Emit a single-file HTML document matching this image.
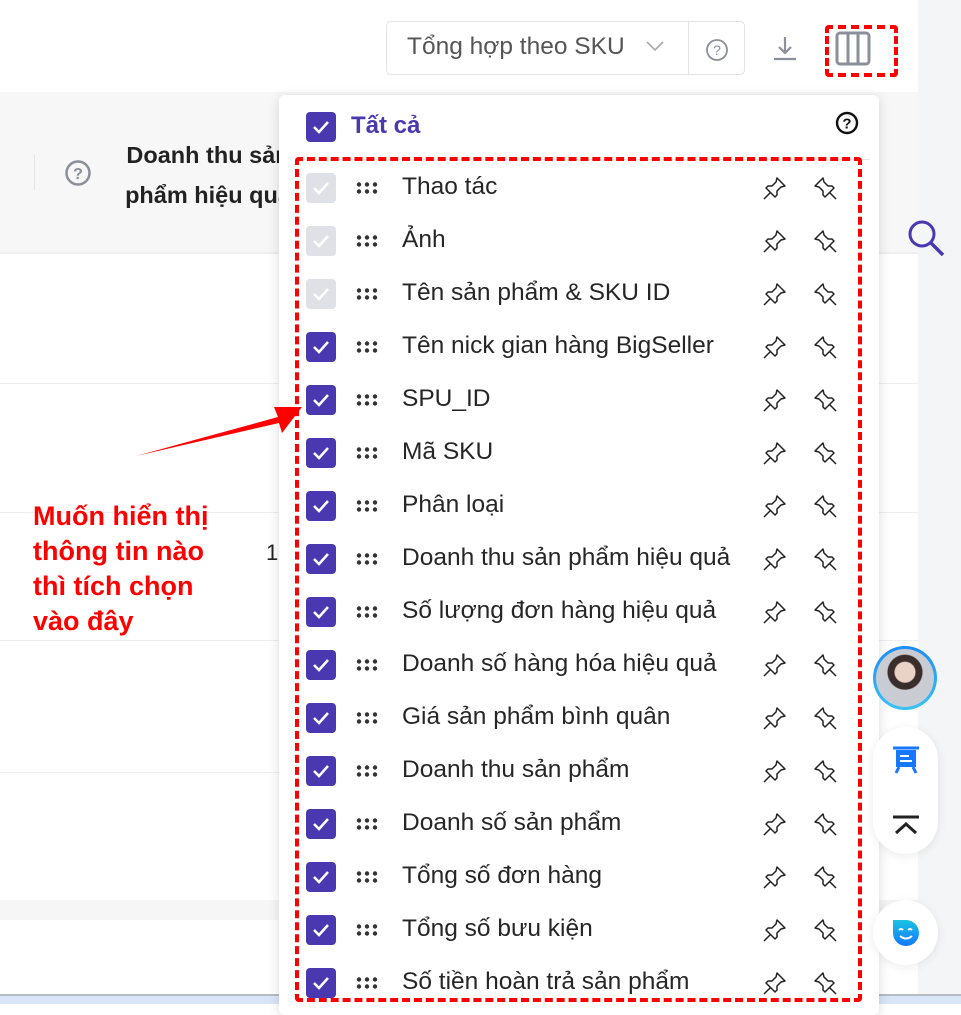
<!DOCTYPE html>
<html><head><meta charset="utf-8"><style>
*{margin:0;padding:0;box-sizing:border-box}
body{width:961px;height:1004px;overflow:hidden;background:#fff;font-family:"Liberation Sans","Noto Sans CJK SC",sans-serif;position:relative;color:#222}
.abs{position:absolute}
.row{position:absolute;left:306px;height:30px;width:540px}
.cb{position:absolute;left:0;top:0;width:30px;height:30px;border-radius:4px;background:#4a38b0}
.cb.dis{background:#dfe1e7}
.cb svg{position:absolute;left:6px;top:7px}
.dots{position:absolute;left:50px;top:9px}
.lbl{position:absolute;left:96px;top:0px;font-size:24.5px;color:#262626;white-space:nowrap}
.pin{position:absolute;top:2px}
</style></head><body>
<div class="abs" style="left:918px;top:0;width:43px;height:1004px;background:#f4f5f7"></div>
<div class="abs" style="left:0;top:92px;width:918px;height:162px;background:#f7f7f8;border-bottom:2px solid #eee"></div>
<div class="abs" style="left:34px;top:155px;width:1px;height:35px;background:#e5e5e5"></div>
<svg class="abs" style="left:64px;top:159px" width="28" height="28" viewBox="0 0 28 28"><circle cx="14" cy="14" r="11.5" fill="none" stroke="#8a8f99" stroke-width="2.5"/><text x="14" y="20" font-size="16" font-weight="bold" text-anchor="middle" fill="#8a8f99" font-family="Liberation Sans">?</text></svg>
<div class="abs" style="left:108px;top:135px;font-size:23.5px;font-weight:bold;line-height:40px;color:#222;text-align:center;width:200px">Doanh thu sản<br>phẩm hiệu quả</div>
<div class="abs" style="left:0;top:383px;width:918px;height:1px;background:#eee"></div>
<div class="abs" style="left:0;top:512px;width:918px;height:1px;background:#eee"></div>
<div class="abs" style="left:0;top:640px;width:918px;height:1px;background:#eee"></div>
<div class="abs" style="left:0;top:772px;width:918px;height:1px;background:#eee"></div>
<div class="abs" style="left:0;top:900px;width:918px;height:20px;background:#f6f6f7"></div>
<div class="abs" style="left:266px;top:540px;font-size:22px">1</div>
<div class="abs" style="left:0;top:994px;width:961px;height:10px;background:#d8e6f7;border-top:2px solid #b7bcc4"></div>
<div class="abs" style="left:386px;top:21px;width:359px;height:54px;border:1px solid #e3e3e6;border-radius:5px"></div>
<div class="abs" style="left:688px;top:22px;width:1px;height:52px;background:#e3e3e6"></div>
<div class="abs" style="left:407px;top:33px;font-size:24.5px;color:#555">Tổng hợp theo SKU</div>
<svg class="abs" style="left:645px;top:40px" width="20" height="12"><path d="M2 2l8 8 8-8" fill="none" stroke="#aaa" stroke-width="1.6"/></svg>
<svg class="abs" style="left:705px;top:38px" width="24" height="24" viewBox="0 0 24 24"><circle cx="12" cy="12" r="10" fill="none" stroke="#8a8f99" stroke-width="1.8"/><text x="12" y="17" font-size="14" text-anchor="middle" fill="#8a8f99" font-family="Liberation Sans">?</text></svg>
<svg class="abs" style="left:771px;top:34px" width="28" height="28" viewBox="0 0 28 28"><path d="M14 3v16M8 13l6 6 6-6M3 25h22" fill="none" stroke="#8a8f99" stroke-width="2.2"/></svg>
<svg class="abs" style="left:835px;top:31px" width="36" height="35" viewBox="0 0 36 35"><rect x="2" y="2" width="32" height="31" rx="3" fill="none" stroke="#8a8f99" stroke-width="3"/><path d="M13 2v31M23 2v31" stroke="#8a8f99" stroke-width="3"/></svg>
<div class="abs" style="left:825px;top:25px;width:73px;height:52px;border:4px dashed #f00;border-radius:4px"></div>
<svg class="abs" style="left:906px;top:218px" width="40" height="40" viewBox="0 0 40 40"><circle cx="16" cy="16" r="12" fill="none" stroke="#4a38b0" stroke-width="3"/><path d="M25 25l12 12" stroke="#4a38b0" stroke-width="3.5"/></svg>
<div class="abs" style="left:33px;top:499px;font-size:27px;font-weight:bold;color:#f00;line-height:35px">Muốn hiển thị<br>thông tin nào<br>thì tích chọn<br>vào đây</div>
<div class="abs" style="left:279px;top:95px;width:600px;height:920px;background:#fff;border-radius:6px;box-shadow:0 2px 12px rgba(0,0,0,.14)"></div>
<div class="abs" style="left:296px;top:159px;width:574px;height:1px;background:#e6e6e6"></div>
<div class="row" style="top:112px"><div class="cb"><svg width="18" height="16"><path d="M2 8l5 5 9-10" fill="none" stroke="#fff" stroke-width="2.5"/></svg></div><div class="lbl" style="left:45px;top:0;font-weight:bold;color:#4a38b0;font-size:24px">Tất cả</div></div>
<svg class="abs" style="left:835px;top:111px" width="24" height="24" viewBox="0 0 24 24"><circle cx="12" cy="12" r="10" fill="none" stroke="#111" stroke-width="2.4"/><text x="12" y="17.5" font-size="15" font-weight="bold" text-anchor="middle" fill="#111" font-family="Liberation Sans">?</text></svg>
<div id="rows"></div>
<div class="abs" style="left:295px;top:157px;width:567px;height:845px;border:4px dashed #f00;border-radius:4px"></div>
<svg class="abs" style="left:130px;top:395px" width="175" height="70"><path d="M6 61 L148 22 L144 12 L172 12 L152 38 L149 28 Z" fill="#f00"/></svg>
<div class="abs" style="left:873px;top:646px;width:64px;height:64px;border-radius:50%;background:linear-gradient(#1d8cf8,#38c3f5);padding:3px"><div style="width:58px;height:58px;border-radius:50%;background:radial-gradient(circle at 50% 40%,#e9d3c6 0 10px,#3a2e2a 11px 17px,#c9ccd2 18px)"></div></div>
<div class="abs" style="left:873px;top:727px;width:65px;height:127px;border-radius:33px;background:#fff;box-shadow:0 2px 10px rgba(0,0,0,.08)"></div>
<svg class="abs" style="left:891px;top:745px" width="30" height="30" viewBox="0 0 30 30"><path d="M2 3h26" stroke="#1677ff" stroke-width="3"/><rect x="5" y="5" width="20" height="17" fill="#1677ff"/><path d="M9 11h9M9 16h12" stroke="#fff" stroke-width="2"/><path d="M8 22l-3 6M22 22l3 6" stroke="#1677ff" stroke-width="3"/></svg>
<svg class="abs" style="left:891px;top:814px" width="30" height="24"><path d="M2 3h26M5 19l10-9 10 9" fill="none" stroke="#222" stroke-width="3"/></svg>
<div class="abs" style="left:873px;top:900px;width:65px;height:65px;border-radius:50%;background:#fff;box-shadow:0 2px 10px rgba(0,0,0,.08)"></div>
<svg class="abs" style="left:891px;top:918px" width="30" height="30" viewBox="0 0 30 30"><defs><linearGradient id="g" x1="0" y1="0" x2="0" y2="1"><stop offset="0" stop-color="#19c4e0"/><stop offset="1" stop-color="#1677ff"/></linearGradient></defs><path d="M2 2h13a13 13 0 1 1-13 13z" fill="url(#g)"/><path d="M8 12q2-2 4 0M17 12q2-2 4 0M9 18q6 5 12 0" fill="none" stroke="#fff" stroke-width="2"/></svg>
<script>
var L=["Thao tác","Ảnh","Tên sản phẩm & SKU ID","Tên nick gian hàng BigSeller","SPU_ID","Mã SKU","Phân loại","Doanh thu sản phẩm hiệu quả","Số lượng đơn hàng hiệu quả","Doanh số hàng hóa hiệu quả","Giá sản phẩm bình quân","Doanh thu sản phẩm","Doanh số sản phẩm","Tổng số đơn hàng","Tổng số bưu kiện","Số tiền hoàn trả sản phẩm"];
var dots='<svg class="dots" width="24" height="12">'+[3,11,19].map(x=>'<circle cx="'+x+'" cy="2.5" r="2.2" fill="#333"/><circle cx="'+x+'" cy="9.5" r="2.2" fill="#333"/>').join('')+'</svg>';
var pin1='<svg class="pin" style="left:456px" width="26" height="26" viewBox="0 0 26 26"><path d="M15 3l8 8-4 1-4 4 0 4-2 2-9-9 2-2 4 0 4-4z M8 18l-6 6" fill="none" stroke="#222" stroke-width="1.5" stroke-linejoin="round"/></svg>';
var pin2='<svg class="pin" style="left:506px" width="26" height="26" viewBox="0 0 26 26"><path d="M11 3l-8 8 4 1 4 4 0 4 2 2 9-9-2-2-4 0-4-4z M18 18l6 6" fill="none" stroke="#222" stroke-width="1.5" stroke-linejoin="round"/></svg>';
var h='';L.forEach(function(t,i){var top=173+53*i;h+='<div class="row" style="top:'+top+'px"><div class="cb'+(i<3?' dis':'')+'"><svg width="18" height="16"><path d="M2 8l5 5 9-10" fill="none" stroke="#fff" stroke-width="2.5"/></svg></div>'+dots+'<div class="lbl">'+t+'</div>'+pin1+pin2+'</div>';});
document.getElementById('rows').innerHTML=h;
</script>
</body></html>
